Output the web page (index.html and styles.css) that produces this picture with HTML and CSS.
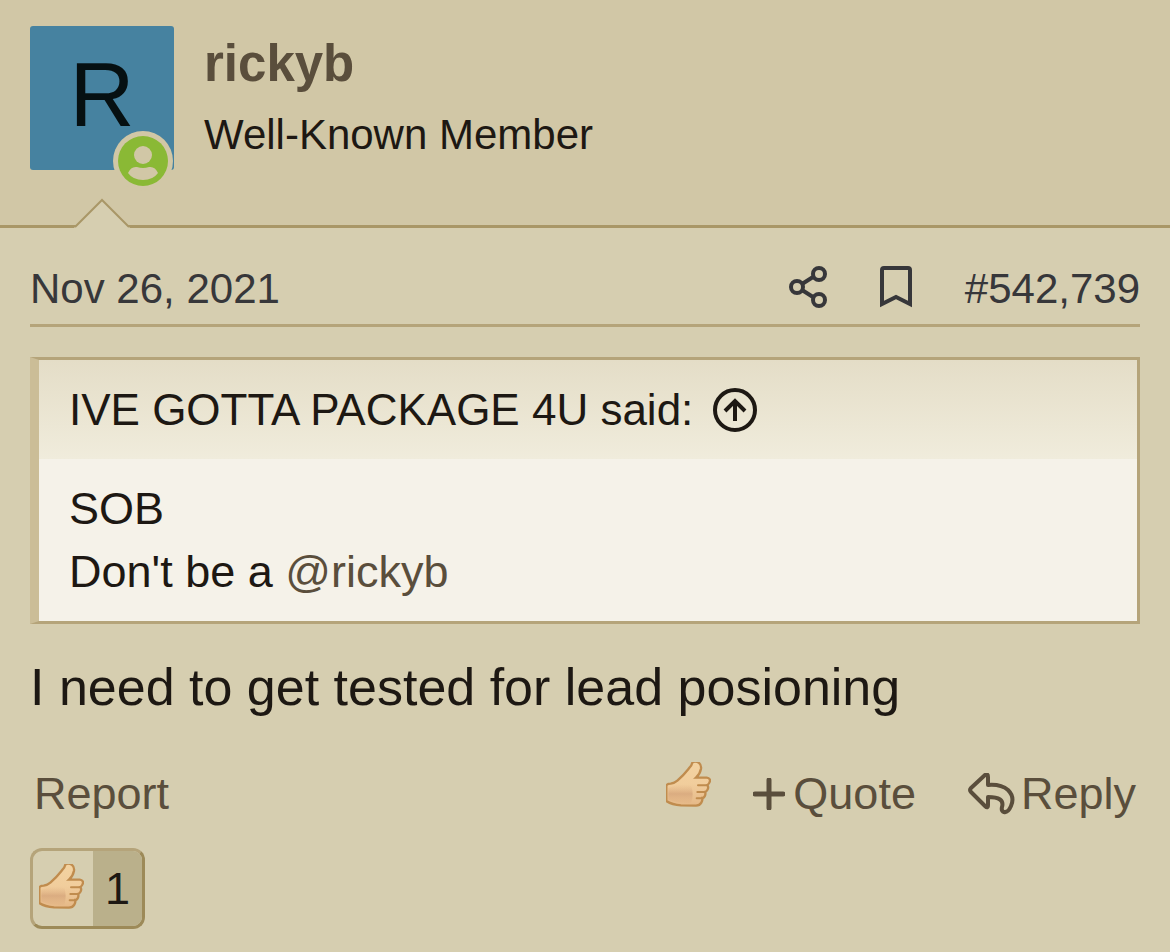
FILE: index.html
```
<!DOCTYPE html>
<html lang="en">
<head>
    <meta charset="UTF-8">
    <meta name="viewport" content="width=device-width, initial-scale=1.0">
    <title>rickyb - post #542,739</title>
    <link rel="stylesheet" href="styles.css">
</head>
<body>
    <!-- thumb shape used by the action bar and the reaction counter -->
    <svg class="defs" width="0" height="0" aria-hidden="true">
        <defs>
            <linearGradient id="skin" x1="0" y1="0" x2="0" y2="1">
                <stop offset="0" stop-color="#f3d3a1"/>
                <stop offset="0.5" stop-color="#f1cd9c"/>
                <stop offset="1" stop-color="#e5b887"/>
            </linearGradient>
            <linearGradient id="palm" x1="0" y1="0" x2="0" y2="1">
                <stop offset="0" stop-color="#e3b88a" stop-opacity="0"/>
                <stop offset="0.5" stop-color="#d6a67c" stop-opacity="0.8"/>
                <stop offset="1" stop-color="#e3b484" stop-opacity="0.4"/>
            </linearGradient>
            <symbol id="thumb" viewBox="0 0 135 135">
                <path d="M1 70 Q5 65 14 65 Q26 63 34 56 Q54 38 68 20 Q78 10 79 2 Q84 -3 94 0 Q107 6 105 20 Q102 36 90 47 L122 47 Q135 49 131 60 Q129 66 124 69 Q129 76 124 84 Q121 89 117 90 Q120 96 116 103 Q113 108 109 108 Q110 115 106 122 Q101 131 90 131 L45 130 Q18 128 1 117 Z" fill="url(#skin)" stroke="#c08c4e" stroke-width="7"/>
                <path d="M7 78 Q40 62 76 72 Q84 96 76 122 Q40 126 7 113 Z" fill="url(#palm)" stroke="none"/>
                <path d="M96 70 H122 M94 90 H115 M92 109 H107" fill="none" stroke="#c08c4e" stroke-width="6" stroke-linecap="round"/>
            </symbol>
        </defs>
    </svg>

    <article class="post">
        <header class="user">
            <div class="avatar">
                R
                <svg class="online" viewBox="0 0 62 62" role="img" aria-label="Online now">
                    <circle class="ring" cx="31" cy="31" r="30"/>
                    <circle class="disc" cx="31" cy="31" r="25"/>
                    <circle class="ring" cx="31" cy="25" r="9"/>
                    <path class="ring" d="M16 43 Q19 36 25 37 Q31 39 37 37 Q43 36 46 43 Q41 50 31 50 Q21 50 16 43 Z"/>
                </svg>
            </div>
            <div class="user-text">
                <h1><a href="#">rickyb</a></h1>
                <div class="user-title">Well-Known Member</div>
            </div>
            <svg class="caret" viewBox="0 0 56 30" aria-hidden="true">
                <path class="caret-fill" d="M0 30 L28 1 L56 30 Z"/>
                <path class="caret-line" d="M1 29 L28 2 L55 29"/>
            </svg>
        </header>

        <div class="content">
            <div class="meta">
                <a href="#"><time datetime="2021-11-26">Nov 26, 2021</time></a>
                <div class="meta-right">
                    <a href="#" aria-label="Share">
                        <svg class="icon-share" viewBox="0 0 38 43">
                            <path d="M13 18 L24 11 M13 24 L24 31"/>
                            <circle cx="8" cy="21" r="6"/>
                            <circle cx="30" cy="8" r="6"/>
                            <circle cx="30" cy="34" r="6"/>
                        </svg>
                    </a>
                    <a href="#" aria-label="Bookmark">
                        <svg class="icon-bookmark" viewBox="0 0 32 43">
                            <path d="M2 38 V4 Q2 2 4 2 H28 Q30 2 30 4 V38 L16 31 Z"/>
                        </svg>
                    </a>
                    <a href="#">#542,739</a>
                </div>
            </div>

            <blockquote class="quote">
                <div class="quote-title">
                    <a href="#">IVE GOTTA PACKAGE 4U said:
                        <svg class="icon-up" viewBox="0 0 44 44" aria-hidden="true">
                            <circle cx="22" cy="22" r="20"/>
                            <path d="M22 33 V13 M12 23 L22 13 L32 23"/>
                        </svg>
                    </a>
                </div>
                <div class="quote-body">
                    SOB<br>
                    Don't be a <a href="#">@rickyb</a>
                </div>
            </blockquote>

            <p class="message">I need to get tested for lead posioning</p>

            <div class="actions">
                <a href="#">Report</a>
                <div class="actions-right">
                    <button type="button" aria-label="Like"><svg class="thumb"><use href="#thumb"/></svg></button>
                    <button type="button">
                        <svg class="icon-plus" viewBox="0 0 32 32" aria-hidden="true"><path d="M2 16 H30 M16 2 V30"/></svg>
                        Quote
                    </button>
                    <a href="#">
                        <svg class="icon-reply" viewBox="0 0 47 42" aria-hidden="true">
                            <path d="M17 2 Q20 0 20 4 V12 Q33 11 40 17 Q47 24 43 33 Q40 40 36 39 Q33 38 34 34 Q37 24 20 24 V32 Q20 36 17 33 L3 19 Q1 17 3 15 Z"/>
                        </svg>
                        Reply
                    </a>
                </div>
            </div>

            <a class="reactions" href="#" aria-label="1 like">
                <span class="reaction-icon"><svg class="thumb"><use href="#thumb"/></svg></span>
                <span class="reaction-count">1</span>
            </a>
        </div>
    </article>
</body>
</html>
```
FILE: styles.css
```
* {
    box-sizing: border-box;
}
body {
    margin: 0;
    background-color: #d6ceb0;
    color: #1d1813;
    font-family: "Liberation Sans", Arial, Helvetica, sans-serif;
    font-size: 45px;
    line-height: 63px;
}
a {
    color: inherit;
    text-decoration: none;
}
svg {
    display: block;
    fill: none;
    stroke: currentColor;
}
.defs {
    position: absolute;
}

/* user bar */
.user {
    position: relative;
    display: flex;
    gap: 30px;
    padding: 26px 30px 55px;
    background-color: #d1c7a6;
    border-bottom: 3px solid #a99767;
}
.avatar {
    position: relative;
    width: 144px;
    height: 144px;
    border-radius: 3px;
    background-color: #4682a0;
    color: #061012;
    font-size: 90px;
    line-height: 138px;
    text-align: center;
}
.online {
    position: absolute;
    right: 0;
    bottom: -22px;
    width: 62px;
    height: 62px;
    stroke: none;
}
.ring {
    fill: #d1c7a6;
}
.disc {
    fill: #8ab935;
}
.user-text {
    padding-top: 8px;
}
.user-text h1 {
    margin: 0 0 11px;
    color: #5a4e3c;
    font-size: 51px;
    line-height: 60px;
}
.user-title {
    font-size: 42px;
    line-height: 60px;
}
.caret {
    position: absolute;
    left: 74px;
    bottom: -3px;
    width: 56px;
    height: 30px;
}
.caret-fill {
    fill: #d6ceb0;
    stroke: none;
}
.caret-line {
    stroke: #a99767;
    stroke-width: 2;
}

/* post */
.content {
    padding: 29px 30px;
}
.meta {
    display: flex;
    justify-content: space-between;
    height: 70px;
    margin-bottom: 30px;
    border-bottom: 3px solid #b5a47a;
    color: #37373a;
    font-size: 42px;
}
.meta-right {
    display: flex;
    gap: 53px;
}
.icon-share {
    width: 38px;
    height: 43px;
    margin-top: 9px;
    stroke-width: 4;
}
.icon-bookmark {
    width: 32px;
    height: 43px;
    margin-top: 9px;
    stroke-width: 4;
}
.quote {
    margin: 0 0 28px;
    background-color: #f5f2e9;
    border: 3px solid #b5a47a;
    border-left: 9px solid #cbbd97;
}
.quote-title {
    padding: 18px 30px;
    background: linear-gradient(#e4ddc7, #f0ecdc);
    font-size: 44px;
}
.quote-title a {
    display: flex;
    align-items: center;
    gap: 20px;
}
.icon-up {
    width: 44px;
    height: 44px;
    stroke-width: 4;
}
.quote-body {
    padding: 18px 30px;
}
.quote-body a {
    color: #5a4e3c;
}
.message {
    margin: 0 0 39px;
    font-size: 52px;
    line-height: 71px;
}

/* action bar */
.actions {
    display: flex;
    justify-content: space-between;
    margin-bottom: 23px;
    padding: 0 4px;
    color: #5a4e3c;
}
.actions-right {
    display: flex;
    gap: 42px;
}
.actions-right a {
    display: flex;
    align-items: center;
    gap: 6px;
    margin-left: 10px;
}
button {
    display: flex;
    align-items: center;
    gap: 8px;
    padding: 0;
    border: none;
    background: none;
    color: inherit;
    font: inherit;
    cursor: pointer;
}
.thumb {
    width: 45px;
    height: 45px;
}
button .thumb {
    margin-bottom: 18px;
}
.icon-plus {
    width: 32px;
    height: 32px;
    stroke-width: 5;
    stroke-linecap: round;
}
.icon-reply {
    width: 47px;
    height: 42px;
    stroke-width: 4;
    stroke-linejoin: round;
}
.reactions {
    display: inline-flex;
    height: 81px;
    overflow: hidden;
    border: 3px solid;
    border-color: #b5a47a #9d8a58 #9d8a58 #b5a47a;
    border-radius: 12px;
}
.reaction-icon {
    display: flex;
    align-items: center;
    padding: 0 9px 4px 6px;
}
.reaction-count {
    padding: 6px 12px;
    background-color: #bab08b;
}
```
